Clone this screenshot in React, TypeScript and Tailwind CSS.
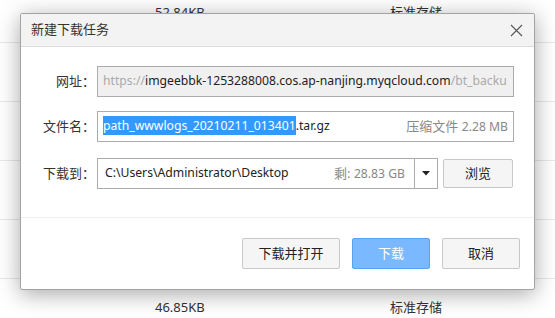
import React from "react";

const font = { fontFamily: '"Noto Sans", "Noto Sans CJK SC", sans-serif' };

function BgRow({ size, kind }: { size: string; kind: string }) {
  return (
    <div className="relative flex h-[59px] items-center border-b border-[#e8e8e8] text-[13px] text-[#333]">
      <span className="absolute left-[155px]">{size}</span>
      <span className="absolute left-[390px]">{kind}</span>
    </div>
  );
}

export default function App() {
  return (
    <div className="relative h-[318px] w-[555px] overflow-hidden bg-white" style={font}>
      {/* background table */}
      <div className="-mt-[16px] flex flex-col">
        <BgRow size="52.84KB" kind="标准存储" />
        <BgRow size="" kind="" />
        <BgRow size="" kind="" />
        <BgRow size="" kind="" />
        <BgRow size="" kind="" />
        <BgRow size="46.85KB" kind="标准存储" />
      </div>

      {/* dialog */}
      <div className="absolute left-[20px] top-[13px] flex h-[277px] w-[515px] flex-col rounded-[2px] border border-[#a3a3a3] bg-white shadow-[0_4px_22px_rgba(0,0,0,0.35)]">
        <div className="flex h-[33px] items-center justify-between border-b border-[#dcdcdc] bg-[#f3f3f3] pl-[10px] pr-[11px]">
          <span className="text-[13px] text-[#333]">新建下载任务</span>
          <svg width="13" height="13" viewBox="0 0 13 13" className="mt-[1px]">
            <path d="M1 1 L12 12 M12 1 L1 12" stroke="#555" strokeWidth="1.1" fill="none" />
          </svg>
        </div>

        <div className="flex flex-col pt-[19px] text-[13px] text-[#333]">
          {/* URL row */}
          <div className="flex items-center">
            <div className="w-[74px] text-right">网址：</div>
            <div className="ml-[2px] flex h-[31px] w-[417px] items-center overflow-hidden whitespace-nowrap border border-[#ababab] bg-[#f0f0f0] pl-[5px] text-[12.2px]">
              <span className="text-[#aaa]">https://</span>
              <span className="text-[#222]">imgeebbk-1253288008.cos.ap-nanjing.myqcloud.com</span>
              <span className="text-[#aaa]">/bt_backu</span>
            </div>
          </div>

          {/* filename row */}
          <div className="mt-[14px] flex items-center">
            <div className="w-[74px] text-right">文件名：</div>
            <div className="ml-[2px] flex h-[31px] w-[417px] items-center justify-between whitespace-nowrap border border-[#ababab] bg-white pl-[5px] pr-[5px]">
              <span className="text-[12.2px] text-[#222]">
                <span className="bg-[#3399ff] py-[1px] text-white">path_wwwlogs_20210211_013401</span>
                .tar.gz
              </span>
              <span className="text-[#888]">
                压缩文件 <span className="text-[12.2px]">2.28 MB</span>
              </span>
            </div>
          </div>

          {/* dest row */}
          <div className="mt-[16px] flex items-center">
            <div className="w-[74px] text-right">下载到：</div>
            <div className="ml-[2px] flex h-[31px] w-[341px] items-stretch whitespace-nowrap border border-[#ababab] bg-white">
              <div className="flex flex-1 items-center justify-between pl-[7px] pr-[9px]">
                <span className="text-[12.2px] text-[#222]">C:\Users\Administrator\Desktop</span>
                <span className="text-[#888]">
                  剩: <span className="text-[12.2px]">28.83 GB</span>
                </span>
              </div>
              <div className="flex w-[23px] items-center justify-center border-l border-[#ababab]">
                <svg width="8" height="5" viewBox="0 0 8 5">
                  <path d="M0 0 L8 0 L4 4.5 Z" fill="#222" />
                </svg>
              </div>
            </div>
            <button className="ml-[5px] flex h-[29px] w-[70px] items-center justify-center rounded-[2px] border border-[#c8c8c8] bg-[#f5f5f5] text-[13px] text-[#222]">
              浏览
            </button>
          </div>
        </div>

        <div className="mt-[28px] border-t border-[#efefef]" />

        <div className="mt-[20px] flex justify-end gap-[12px] pr-[14px] text-[13px]">
          <button className="flex h-[31px] w-[98px] items-center justify-center rounded-[2px] border border-[#c8c8c8] bg-[#f5f5f5] text-[#222]">
            下载并打开
          </button>
          <button className="flex h-[31px] w-[78px] items-center justify-center rounded-[2px] border border-[#5aa2f2] bg-[#7ab8ff] text-white">
            下载
          </button>
          <button className="flex h-[31px] w-[78px] items-center justify-center rounded-[2px] border border-[#c8c8c8] bg-[#f5f5f5] text-[#222]">
            取消
          </button>
        </div>
      </div>
    </div>
  );
}
